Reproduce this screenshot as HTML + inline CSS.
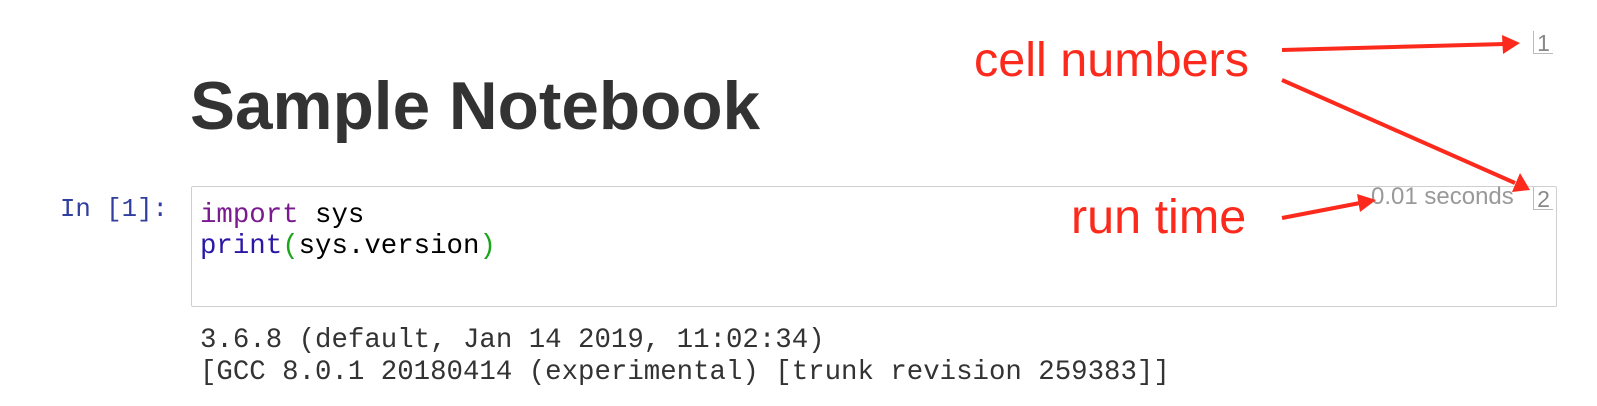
<!DOCTYPE html><html><head><style>
body{margin:0;width:1597px;height:406px;background:#fff;position:relative;overflow:hidden;font-family:"Liberation Sans",sans-serif}
.a{position:absolute;white-space:pre}
.m{font-family:"Liberation Mono",monospace;font-size:27.4px;line-height:31px}
</style></head><body>
<div class="a" style="left:190px;top:67px;font-size:67.5px;font-weight:bold;color:#333;line-height:80px">Sample Notebook</div>
<div class="a m" style="left:60px;top:194px;color:#303F9F;font-size:25.7px">In [1]:</div>
<div class="a" style="left:191px;top:186px;width:1364px;height:119px;border:1px solid #cfcfcf;border-radius:2px;background:#fff"></div>
<div class="a m" style="left:200px;top:200px;color:#000"><span style="color:#7a1a8e">import</span> sys
<span style="color:#2a17a8">print</span><span style="color:#1aa51a">(</span>sys.version<span style="color:#1aa51a">)</span></div>
<div class="a m" style="left:200px;top:325px;color:#333;line-height:32px">3.6.8 (default, Jan 14 2019, 11:02:34)
[GCC 8.0.1 20180414 (experimental) [trunk revision 259383]]</div>
<div class="a" style="left:1371px;top:183px;font-size:24px;color:#999;line-height:28px">0.01 seconds</div>
<div class="a" style="left:1533px;top:187px;width:19px;height:22px;border-left:1px solid #bbb;border-bottom:1px solid #bbb;font-size:23px;color:#888;text-align:center;line-height:24px">2</div>
<div class="a" style="left:1533px;top:31px;width:19px;height:22px;border-left:1px solid #bbb;border-bottom:1px solid #bbb;font-size:23px;color:#888;text-align:center;line-height:24px">1</div>
<div class="a" style="left:974px;top:32px;font-size:48.5px;color:#fc2a1c;line-height:56px">cell numbers</div>
<div class="a" style="left:1071px;top:189px;font-size:48.5px;color:#fc2a1c;line-height:56px">run time</div>
<svg class="a" style="left:0;top:0" width="1597" height="406">
<g stroke="#fc2a1c" stroke-width="4" fill="#fc2a1c">
<line x1="1282" y1="50" x2="1505" y2="44"/>
<polygon stroke="none" points="1520,43 1502,35 1503,54"/>
<line x1="1282" y1="80" x2="1515" y2="183"/>
<polygon stroke="none" points="1530,190 1520,173 1512,192"/>
<line x1="1282" y1="218" x2="1360" y2="203"/>
<polygon stroke="none" points="1376,200 1357,194 1360,212"/>
</g></svg>
</body></html>
